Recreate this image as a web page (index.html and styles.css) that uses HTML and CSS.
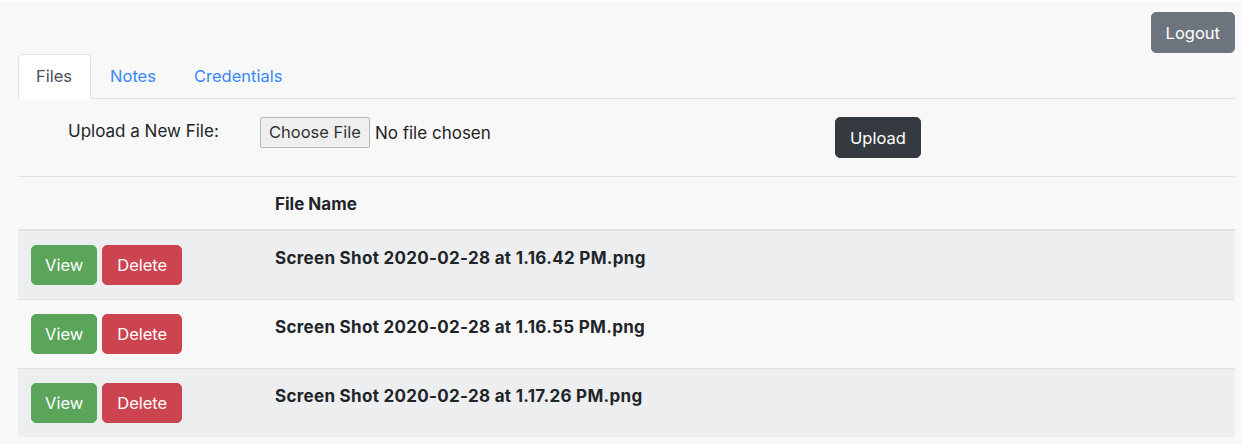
FILE: index.html
```html
<!DOCTYPE html>
<html lang="en">
<head>
<meta charset="utf-8">
<title>Files</title>
<link rel="stylesheet" href="styles.css">
</head>
<body>
<div class="page">
  <div class="topbar">
    <button class="btn btn-secondary" type="button">Logout</button>
  </div>
  <nav class="tabs">
    <a class="tab active" href="#">Files</a>
    <a class="tab" href="#">Notes</a>
    <a class="tab" href="#">Credentials</a>
  </nav>
  <form class="upload">
    <label class="upload-label">Upload a New File:</label>
    <div class="file-input">
      <span class="choose">Choose File</span>
      <span class="nofile">No file chosen</span>
    </div>
    <button class="btn btn-dark" type="button">Upload</button>
  </form>
  <table class="files">
    <thead>
      <tr>
        <th class="col-actions"></th>
        <th>File Name</th>
      </tr>
    </thead>
    <tbody>
      <tr class="striped">
        <td><span class="actions"><button class="btn btn-success" type="button">View</button><button class="btn btn-danger" type="button">Delete</button></span></td>
        <th class="fname">Screen Shot 2020-02-28 at 1.16.42 PM.png</th>
      </tr>
      <tr>
        <td><span class="actions"><button class="btn btn-success" type="button">View</button><button class="btn btn-danger" type="button">Delete</button></span></td>
        <th class="fname">Screen Shot 2020-02-28 at 1.16.55 PM.png</th>
      </tr>
      <tr class="striped">
        <td><span class="actions"><button class="btn btn-success" type="button">View</button><button class="btn btn-danger" type="button">Delete</button></span></td>
        <th class="fname">Screen Shot 2020-02-28 at 1.17.26 PM.png</th>
      </tr>
    </tbody>
  </table>
</div>
</body>
</html>
```

FILE: styles.css
```css
* { box-sizing: border-box; }

html, body {
  margin: 0;
  background: #f8f8f8;
}

body {
  font-family: Inter, "Liberation Sans", Arial, sans-serif;
  font-size: 17px;
  line-height: 26px;
  color: #212529;
}

.page {
  border-top: 2px solid #ffffff;
  padding: 0 7px 0 18px;
}

.topbar {
  display: flex;
  justify-content: flex-end;
  padding-top: 10px;
}

.btn {
  font-family: inherit;
  font-size: 16.5px;
  line-height: 26px;
  height: 41px;
  padding: 0 14px;
  border: 1px solid transparent;
  border-radius: 5px;
  color: #ffffff;
  cursor: pointer;
}

.btn-secondary { background: #6c757d; border-color: #6c757d; }
.btn-dark { background: #343a40; border-color: #343a40; }
.btn-success { background: #5aa55a; border-color: #5aa55a; height: 40px; padding: 0 13px; }
.btn-danger { background: #cc4450; border-color: #cc4450; height: 40px; }

.tabs {
  display: flex;
  margin-top: 1px;
  border-bottom: 1px solid #dee2e6;
}

.tab {
  display: block;
  padding: 8px 18px 9px;
  border: 1px solid transparent;
  border-top-left-radius: 5px;
  border-top-right-radius: 5px;
  margin-bottom: -1px;
  font-size: 16.5px;
  color: #3a86f7;
  text-decoration: none;
}

.tab.active {
  padding-left: 17px;
  background: #ffffff;
  color: #495057;
  border-color: #dee2e6 #dee2e6 #ffffff;
}

.upload {
  display: flex;
  align-items: flex-start;
  padding: 18px 0;
  border-bottom: 1px solid #dee2e6;
}

.upload-label {
  width: 242px;
  padding: 1px 0 0 50px;
}

.file-input {
  display: flex;
  align-items: center;
  width: 575px;
}

.choose {
  display: block;
  height: 31px;
  line-height: 29px;
  padding: 0 8px;
  font-size: 16.5px;
  background: #efefef;
  border: 1px solid #b8b8b8;
  border-radius: 2px;
  color: #333333;
}

.nofile {
  margin-left: 5px;
  color: #222222;
}

.files {
  width: 100%;
  border-collapse: collapse;
}

.files th,
.files td {
  padding: 14px 13px;
  text-align: left;
  vertical-align: top;
  font-weight: 700;
}

.files thead th {
  padding-bottom: 12px;
  border-bottom: 2px solid #dee2e6;
}

.files .fname {
  letter-spacing: 0.3px;
}

.files .col-actions { width: 244px; }

.files tbody tr {
  border-top: 1px solid #dee2e6;
}

.files tbody tr.striped {
  background: #edeef0;
}

.actions {
  display: flex;
  gap: 5px;
}

.actions .btn { font-weight: 400; }
```
